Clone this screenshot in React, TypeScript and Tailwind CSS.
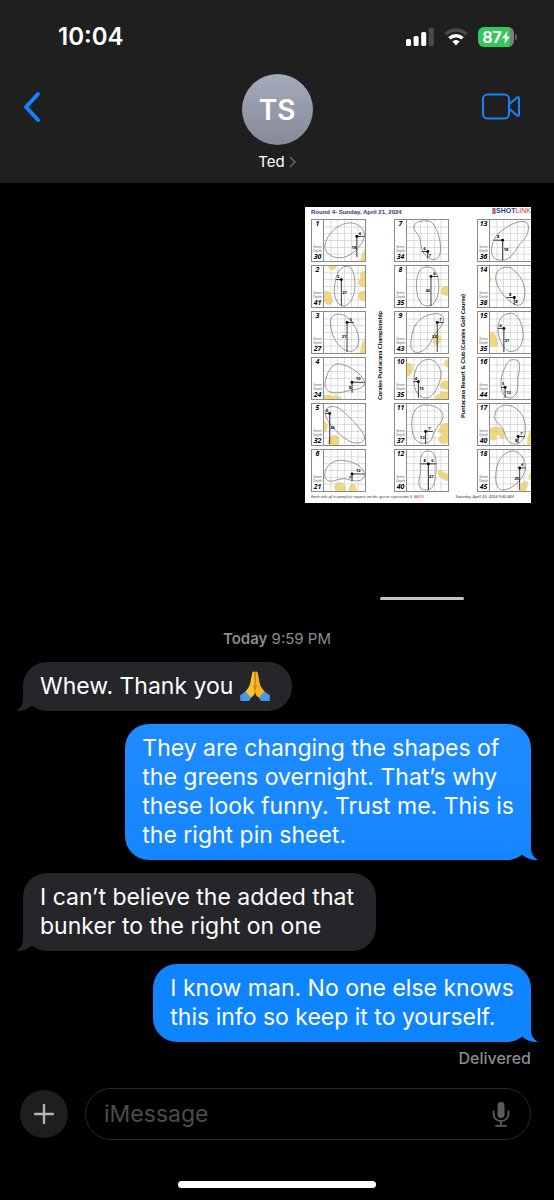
import type { ReactNode } from "react"

interface Hole {
  hole: number
  depth: number
  outline: string
  pin: [number, number]
  // horizontal measuring line, from x to x
  across: [number, number]
  bottom: number
  labels: [string, number, number][]
  bunkers?: string[]
}

const columns: Hole[][] = [
  [
    {
      hole: 1,
      depth: 30,
      outline: "M3 80C10 40 50 8 85 9C110 10 128 30 129 48C125 80 85 120 50 120C20 120 0 100 3 80Z",
      pin: [104, 52],
      across: [104, 128],
      bottom: 118,
      labels: [["6", 115, 46], ["18", 95, 91]],
      bunkers: ["M115 130Q120 100 130 92V130Z"],
    },
    {
      hole: 2,
      depth: 41,
      outline: "M70 1C92 0 99 30 98 65C97 100 80 127 62 127C42 127 30 95 33 70C36 30 48 2 70 1Z",
      pin: [55, 43],
      across: [38, 55],
      bottom: 127,
      labels: [["5", 46, 37], ["27", 65, 89]],
      bunkers: [
        "M14 0H40Q38 12 26 13Q14 12 14 0Z",
        "M130 16Q118 14 114 30Q118 40 108 50Q110 68 130 66Z",
        "M130 78Q110 76 108 95Q112 114 130 112Z",
        "M0 82Q10 76 20 84Q24 100 28 106Q28 122 14 124Q4 122 0 112Z",
      ],
    },
    {
      hole: 3,
      depth: 27,
      outline: "M20 30C20 8 50 -2 72 15C100 40 112 70 110 95C105 125 85 130 65 120C40 105 20 70 20 30Z",
      pin: [73, 33],
      across: [73, 95],
      bottom: 127,
      labels: [["5", 85, 27], ["21", 64, 82]],
      bunkers: ["M114 130Q118 96 130 80V130Z"],
    },
    {
      hole: 4,
      depth: 24,
      outline: "M3 85C5 50 25 18 45 18C80 22 128 55 129 80C127 100 95 100 75 104C50 112 10 120 3 85Z",
      pin: [89, 77],
      across: [89, 128],
      bottom: 110,
      labels: [["10", 109, 71], ["8", 83, 97]],
      bunkers: ["M0 130V118Q14 114 26 120Q44 114 58 130Z"],
    },
    {
      hole: 5,
      depth: 32,
      outline: "M3 28C5 5 35 2 55 18C85 45 125 85 129 105C128 125 105 127 85 120C60 110 5 60 3 28Z",
      pin: [18, 30],
      across: [4, 18],
      bottom: 127,
      labels: [["6", 10, 25], ["26", 27, 80]],
      bunkers: ["M0 52Q12 58 12 74Q10 90 0 92Z", "M12 130Q10 112 22 102Q36 94 46 104Q52 118 46 130Z"],
    },
    {
      hole: 6,
      depth: 21,
      outline: "M3 75C5 45 35 30 60 33C90 36 127 50 129 80C127 100 100 102 75 93C50 85 30 105 12 97C3 92 2 85 3 75Z",
      pin: [89, 76],
      across: [89, 128],
      bottom: 98,
      labels: [["12", 109, 70], ["7", 83, 92]],
      bunkers: ["M32 116Q40 100 54 102Q70 106 70 130H36Z", "M76 130Q80 108 92 106Q104 112 104 130Z"],
    },
  ],
  [
    {
      hole: 7,
      depth: 34,
      outline: "M22 20C25 2 60 0 75 5C95 20 108 60 106 100C104 125 85 130 72 122C50 110 45 90 42 65C40 45 20 35 22 20Z",
      pin: [66, 100],
      across: [46, 66],
      bottom: 122,
      labels: [["6", 56, 94], ["7", 73, 117]],
    },
    {
      hole: 8,
      depth: 35,
      outline: "M60 3C85 0 100 25 101 60C102 95 90 127 65 127C40 127 29 95 30 60C31 25 40 5 60 3Z",
      pin: [76, 33],
      across: [76, 98],
      bottom: 127,
      labels: [["6", 87, 27], ["26", 66, 82]],
      bunkers: ["M130 64Q114 60 106 76Q108 96 130 94Z"],
    },
    {
      hole: 9,
      depth: 43,
      outline: "M12 100C15 60 25 30 55 15C85 2 110 0 116 20C118 45 90 60 80 85C70 110 50 130 30 128C15 126 12 115 12 100Z",
      pin: [96, 33],
      across: [96, 116],
      bottom: 127,
      labels: [["7", 106, 27], ["32", 87, 84]],
      bunkers: ["M96 68Q112 76 108 92Q100 106 86 104Q78 94 84 82Z"],
    },
    {
      hole: 10,
      depth: 35,
      outline: "M22 75C22 40 35 5 70 4C95 5 110 40 108 55C105 80 85 127 60 127C35 125 22 100 22 75Z",
      pin: [36, 75],
      across: [21, 36],
      bottom: 127,
      labels: [["4", 28, 69], ["15", 46, 103]],
      bunkers: [
        "M0 14Q20 14 19 34Q16 56 0 60Z",
        "M130 4Q116 6 118 20Q122 30 130 30Z",
        "M130 72Q108 68 104 88Q108 100 120 98L130 102Z",
        "M88 130Q90 116 104 114Q108 102 130 108V130Z",
      ],
    },
    {
      hole: 11,
      depth: 37,
      outline: "M15 60C15 25 30 3 60 3C90 3 115 20 114 40C112 60 90 75 82 100C78 120 65 127 45 124C20 118 15 90 15 60Z",
      pin: [59, 87],
      across: [59, 82],
      bottom: 127,
      labels: [["7", 71, 81], ["12", 49, 110]],
      bunkers: ["M130 60Q106 58 104 76Q90 88 104 92Q112 94 112 98Q96 102 100 118Q116 134 130 122Z"],
    },
    {
      hole: 12,
      depth: 40,
      outline: "M65 3C90 0 95 35 92 65C90 100 85 127 62 127C35 127 35 105 40 85C46 65 40 50 43 30C45 12 52 4 65 3Z",
      pin: [68, 44],
      across: [43, 93],
      bottom: 127,
      labels: [["8", 56, 38], ["6", 81, 38], ["27", 77, 89]],
      bunkers: ["M98 66Q110 60 114 70L130 74V98Q116 98 110 88Q96 86 98 66Z"],
    },
  ],
  [
    {
      hole: 13,
      depth: 36,
      outline: "M5 100C5 60 25 40 50 25C75 8 105 -2 118 10C128 25 118 55 100 70C85 85 75 120 45 127C20 130 5 120 5 100Z",
      pin: [40, 64],
      across: [12, 40],
      bottom: 127,
      labels: [["8", 26, 58], ["18", 51, 99]],
    },
    {
      hole: 14,
      depth: 38,
      outline: "M18 35C20 10 40 0 65 5C95 25 112 55 111 90C108 115 100 127 85 124C55 115 15 65 18 35Z",
      pin: [77, 100],
      across: [52, 77],
      bottom: 124,
      labels: [["8", 64, 94], ["8", 84, 116]],
      bunkers: ["M0 30Q8 40 0 52Z"],
    },
    {
      hole: 15,
      depth: 35,
      outline: "M25 50C27 15 50 0 75 5C95 15 106 50 105 80C100 115 85 127 60 125C40 115 24 80 25 50Z",
      pin: [44, 52],
      across: [25, 44],
      bottom: 127,
      labels: [["6", 34, 46], ["21", 54, 94]],
      bunkers: ["M0 62Q20 62 22 88Q32 108 14 112L0 110Z"],
    },
    {
      hole: 16,
      depth: 44,
      outline: "M50 25C55 5 75 0 90 10C98 20 92 45 88 65C90 90 90 120 65 127C40 127 34 100 35 75C36 55 42 40 50 25Z",
      pin: [48, 93],
      across: [35, 48],
      bottom: 127,
      labels: [["5", 42, 87], ["12", 59, 114]],
    },
    {
      hole: 17,
      depth: 40,
      outline: "M15 40C15 10 40 0 65 5C95 15 115 45 112 85C110 115 95 127 75 127C50 120 50 100 42 82C35 65 15 60 15 40Z",
      pin: [89, 103],
      across: [89, 110],
      bottom: 124,
      labels: [["7", 100, 97], ["8", 83, 119]],
      bunkers: [
        "M0 78Q14 66 30 74Q46 80 46 94Q48 112 34 112Q30 96 20 98Q24 116 10 116L0 112Z",
        "M130 80Q118 96 120 110Q114 122 120 130H130Z",
      ],
    },
    {
      hole: 18,
      depth: 45,
      outline: "M18 85C18 45 35 8 70 3C95 2 113 30 113 60C108 90 70 127 40 127C22 125 18 105 18 85Z",
      pin: [94, 57],
      across: [94, 113],
      bottom: 127,
      labels: [["6", 103, 51], ["25", 85, 95]],
      bunkers: ["M96 130Q92 110 108 98Q122 96 120 112Q120 122 112 130Z", "M130 70Q118 80 124 94H130Z"],
    },
  ],
]

const HoleCard = ({ data }: { data: Hole }) => {
  const [px, py] = data.pin
  return (
    <div className="flex h-[43px] w-[55px] border border-[#8a8a8a] text-black">
      <div className="flex w-[11px] shrink-0 flex-col items-center justify-between">
        <span className="text-[7px] leading-[8px] font-bold italic">{data.hole}</span>
        <span className="flex flex-col items-center">
          <span className="text-center text-[3px] leading-[4px] text-[#555]">
            Green
            <br />
            Depth
          </span>
          <span className="text-[7px] leading-[8px] font-bold italic">{data.depth}</span>
        </span>
      </div>
      <svg viewBox="0 0 130 130" className="min-w-0 flex-1 border-l border-[#8a8a8a]" preserveAspectRatio="none">
        {data.bunkers?.map((d) => (
          <path key={d} d={d} fill="#f3d878" />
        ))}
        <path
          d="M22 0V130M43 0V130M65 0V130M87 0V130M108 0V130M0 22H130M0 43H130M0 65H130M0 87H130M0 108H130"
          stroke="#c9c9c9"
          strokeWidth="2"
        />
        <path d={data.outline} fill="none" stroke="#777" strokeWidth="2.4" />
        <path
          d={`M${data.across[0]} ${py}H${data.across[1]}M${px} ${py}V${data.bottom}`}
          stroke="#111"
          strokeWidth="2.6"
        />
        <circle cx={px} cy={py} r="4.5" />
        {data.labels.map(([text, x, y]) => (
          <text key={`${x}-${y}`} x={x} y={y} fontSize="13" fontWeight="700" textAnchor="middle">
            {text}
          </text>
        ))}
      </svg>
    </div>
  )
}

const SideTitle = ({ children }: { children: ReactNode }) => (
  <div className="flex w-[28px] items-center justify-center">
    <p className="rotate-180 font-['Lato',sans-serif] text-[6px] leading-[8px] font-bold whitespace-nowrap text-black [writing-mode:vertical-rl]">
      {children}
    </p>
  </div>
)

const PinSheet = () => (
  <article className="w-[226px] overflow-hidden bg-white pb-[2px] pl-[6px] font-['Noto_Sans',sans-serif]">
    <header className="flex h-[12px] justify-between whitespace-nowrap">
      <h2 className="pt-px font-['Liberation_Sans',sans-serif] text-[6px] leading-[8px] font-bold text-[#3a2c80]">
        Round 4- Sunday, April 21, 2024
      </h2>
      <p className="flex font-['Liberation_Sans',sans-serif] text-[7px] leading-[8px] font-bold text-[#253f7d]">
        <svg viewBox="0 0 4 8" className="mt-px h-[6px] w-[4px]" aria-hidden="true">
          <path d="M0 0h1.5v8H0z" fill="#253f7d" />
          <path d="M2.3 0H4v8H2.3z" fill="#d4283a" />
        </svg>
        SHOT<span className="font-normal text-[#d4283a]">LINK</span>
      </p>
    </header>
    <div className="flex w-max">
      {columns.map((column, i) => (
        <div key={i} className="flex">
          <div className="flex flex-col gap-[3px]">
            {column.map((hole) => (
              <HoleCard key={hole.hole} data={hole} />
            ))}
          </div>
          {i === 0 && <SideTitle>Corales Puntacana Championship</SideTitle>}
          {i === 1 && <SideTitle>Puntacana Resort &amp; Club (Corales Golf Course)</SideTitle>}
        </div>
      ))}
    </div>
    <footer className="flex justify-between pt-px pr-[17px] text-[4px] leading-[8px] whitespace-nowrap text-[#333]">
      <p className="italic">
        Each side of a complete square on the green represents 5 <span className="text-[#e0393e]">YARDS</span>
      </p>
      <p className="font-['Lato',sans-serif]">Saturday, April 20, 2024 9:40 AM</p>
    </footer>
  </article>
)

const PrayingHands = () => (
  <svg
    viewBox="0 0 30 30"
    className="-my-1 ml-[7px] inline-block h-[30px] w-[30px] align-[-3px]"
    role="img"
    aria-label="folded hands"
  >
    <path d="M0 24.500L6 20L11.500 26L9 30H0.500Z" fill="#4a97e8" />
    <path d="M30 24.500L24 20L18.500 26L21 30H29.500Z" fill="#4a97e8" />
    <path
      d="M14.800 1C13.300 0 12.300 1 12 3L10.300 12C9.500 16 7.500 18 5.500 20.500L11 26.500C14.500 25 15 22 15 19Z"
      fill="#fcc331"
    />
    <path
      d="M15.200 1C16.700 0 17.700 1 18 3L19.700 12C20.500 16 22.500 18 24.500 20.500L19 26.500C15.500 25 15 22 15 19Z"
      fill="#f8b51f"
    />
    <path d="M15 2V20M15 18C14.800 15 13.500 14 12.800 16M15 18C15.200 15 16.500 14 17.200 16" fill="none" stroke="#b9760b" strokeWidth="0.9" />
  </svg>
)

interface BubbleProps {
  from: "me" | "them"
  children: ReactNode
  // older sent messages sit in a slightly lighter blue
  faded?: boolean
}

const Bubble = ({ from, children, faded = false }: BubbleProps) => {
  const mine = from === "me"
  const fill = !mine
    ? "bg-[#26262a] text-[#26262a]"
    : faded
      ? "bg-linear-to-b from-[#1f8bff] to-[#1486ff] text-[#1486ff]"
      : "bg-[#0f84ff] text-[#0f84ff]"
  return (
    <div
      className={`relative w-fit rounded-[24px] py-[10px] pl-[17px] text-[23px] leading-[29px] whitespace-nowrap ${
        mine ? "self-end pr-[17px]" : "self-start pr-[22px]"
      } ${fill}`}
    >
      <p className="text-white">{children}</p>
      <svg
        viewBox="0 0 24 24"
        className={`absolute bottom-0 h-6 w-6 ${mine ? "-right-[7px] -scale-x-100" : "-left-[7px]"}`}
        aria-hidden="true"
      >
        <path d="M7 0V12C7 17.500 4.500 21.500 0 24C6 24.400 12 22.500 16 18.500L12 8Z" fill="currentColor" />
      </svg>
    </div>
  )
}

const StatusBar = () => (
  <div className="flex h-[74px] items-center justify-between pr-[37px] pl-[58px]">
    <time className="text-[24px] leading-[30px] font-semibold">10:04</time>
    <div className="flex items-center gap-[10px]">
      <svg viewBox="0 0 28 18" className="h-[18px] w-[28px]" aria-label="Signal">
        <rect x="0" y="11" width="5" height="7" rx="1.500" fill="#fff" />
        <rect x="7.600" y="8" width="5" height="10" rx="1.500" fill="#fff" />
        <rect x="15.200" y="4" width="5" height="14" rx="1.500" fill="#fff" />
        <rect x="22.800" y="0" width="5" height="18" rx="1.500" fill="#4b4b4b" />
      </svg>
      <svg viewBox="0 0 24 18" className="h-[18px] w-[24px]" fill="none" aria-label="Wi-Fi">
        <path d="M1.500 6.200C7.500 0.500 16.500 0.500 22.500 6.200" stroke="#4b4b4b" strokeWidth="3.400" />
        <path d="M5.400 10.300C9.200 6.800 14.800 6.800 18.600 10.300" stroke="#fff" strokeWidth="3.400" />
        <path d="M8.300 13.600C10.500 11.500 13.500 11.500 15.700 13.600L12 17.500Z" fill="#fff" />
      </svg>
      <div className="flex items-center gap-px">
        <div className="flex h-5 w-9 items-center justify-center rounded-md bg-linear-to-r from-[#34c759] from-88% to-[#7b7f7c] to-88%">
          <span className="text-[16px] leading-5 font-bold">87</span>
          <svg viewBox="0 0 8 13" className="h-[13px] w-2" aria-label="Charging">
            <path d="M5.500 0L0 7.300H3.300L2.300 13L8 5.500H4.700Z" fill="#fff" />
          </svg>
        </div>
        <span className="h-[6px] w-[2px] rounded-r-full bg-[#5c5c5c]" />
      </div>
    </div>
  </div>
)

const App = () => {
  return (
    <div className="flex min-h-screen flex-col bg-black font-['Inter',sans-serif] text-white">
      <header className="h-[183px] bg-[#1f1f1f]">
        <StatusBar />
        <div className="flex items-start justify-between pr-[34px] pl-[23px]">
          <button type="button" aria-label="Back" className="mt-[17px] flex w-[38px]">
            <svg viewBox="0 0 18 32" className="h-8 w-[18px]" fill="none">
              <path d="M15 3L3 16L15 29" stroke="#0f84ff" strokeWidth="4" strokeLinecap="round" strokeLinejoin="round" />
            </svg>
          </button>
          <button type="button" className="ml-[11px] flex flex-col items-center">
            <span className="flex size-[71px] items-center justify-center rounded-full bg-linear-to-b from-[#a5abbb] to-[#858a95] text-[28px] leading-9 font-semibold">
              TS
            </span>
            <span className="mt-[7px] flex items-center gap-1 text-[15px] leading-5">
              Ted
              <svg viewBox="0 0 7 12" className="h-3 w-[7px]" fill="none" aria-hidden="true">
                <path d="M1 1L6 6L1 11" stroke="#6b6b6d" strokeWidth="1.400" />
              </svg>
            </span>
          </button>
          <button type="button" aria-label="FaceTime" className="mt-[19px] flex">
            <svg viewBox="0 0 38 27" className="h-[27px] w-[38px]" fill="none" stroke="#1684f8" strokeWidth="2" strokeLinejoin="round">
              <rect x="1" y="1.500" width="26" height="24" rx="4.500" />
              <path d="M27 11.500L35 4.500Q37 3.500 37 5.500V21.500Q37 23.500 35 22.500L27 15.500" />
            </svg>
          </button>
        </div>
      </header>

      <main className="flex flex-1 flex-col px-[23px]">
        <div className="mt-6 self-end">
          <PinSheet />
        </div>
        <div className="mt-[94px] mr-[67px] h-[3px] w-[84px] self-end rounded-full bg-[#c4c4c4]" />
        <p className="mt-[29px] self-center text-[15px] leading-5 text-[#8b8b90]">
          <span className="font-semibold">Today</span> 9:59 PM
        </p>
        <div className="mt-[13px] flex flex-col gap-[13px]">
          <Bubble from="them">
            Whew. Thank you
            <PrayingHands />
          </Bubble>
          <Bubble from="me" faded>
            They are changing the shapes of
            <br />
            the greens overnight. That’s why
            <br />
            these look funny. Trust me. This is
            <br />
            the right pin sheet.
          </Bubble>
          <Bubble from="them">
            I can’t believe the added that
            <br />
            bunker to the right on one
          </Bubble>
          <Bubble from="me">
            I know man. No one else knows
            <br />
            this info so keep it to yourself.
          </Bubble>
        </div>
        <p className="mt-[6px] self-end text-[16px] leading-5 font-medium text-[#8b8b90]">Delivered</p>
      </main>

      <footer className="px-5 pt-5 pb-[12px]">
        <form className="flex items-center gap-[17px] pr-[3px]" onSubmit={(e) => e.preventDefault()}>
          <button type="button" aria-label="Add" className="flex size-12 shrink-0 items-center justify-center rounded-full bg-[#1e1e20]">
            <svg viewBox="0 0 20 20" className="size-5" aria-hidden="true">
              <path d="M10 1V19M1 10H19" stroke="#b4b4b6" strokeWidth="2.400" strokeLinecap="round" />
            </svg>
          </button>
          <div className="flex h-[52px] min-w-0 flex-1 items-center rounded-full border border-[#29292b] pr-5 pl-[18px]">
            <input
              type="text"
              aria-label="iMessage"
              placeholder="iMessage"
              className="min-w-0 flex-1 bg-transparent text-[23px] leading-[29px] outline-none placeholder:text-[#4b4b4e]"
            />
            <button type="button" aria-label="Dictate">
              <svg viewBox="0 0 18 26" className="h-[26px] w-[18px]" fill="none" stroke="#5c5c5f" strokeWidth="1.800" strokeLinecap="round">
                <rect x="5.500" y="1" width="7" height="16" rx="3.500" fill="#5c5c5f" stroke="none" />
                <path d="M1.500 10.500V12.500C1.500 17.500 5 20 9 20S16.500 17.500 16.500 12.500V10.500M9 20V24.500M4 24.800H14" />
              </svg>
            </button>
          </div>
        </form>
        <div className="mx-auto mt-[41px] h-[7px] w-[198px] rounded-full bg-white" />
      </footer>
    </div>
  )
}

export default App
